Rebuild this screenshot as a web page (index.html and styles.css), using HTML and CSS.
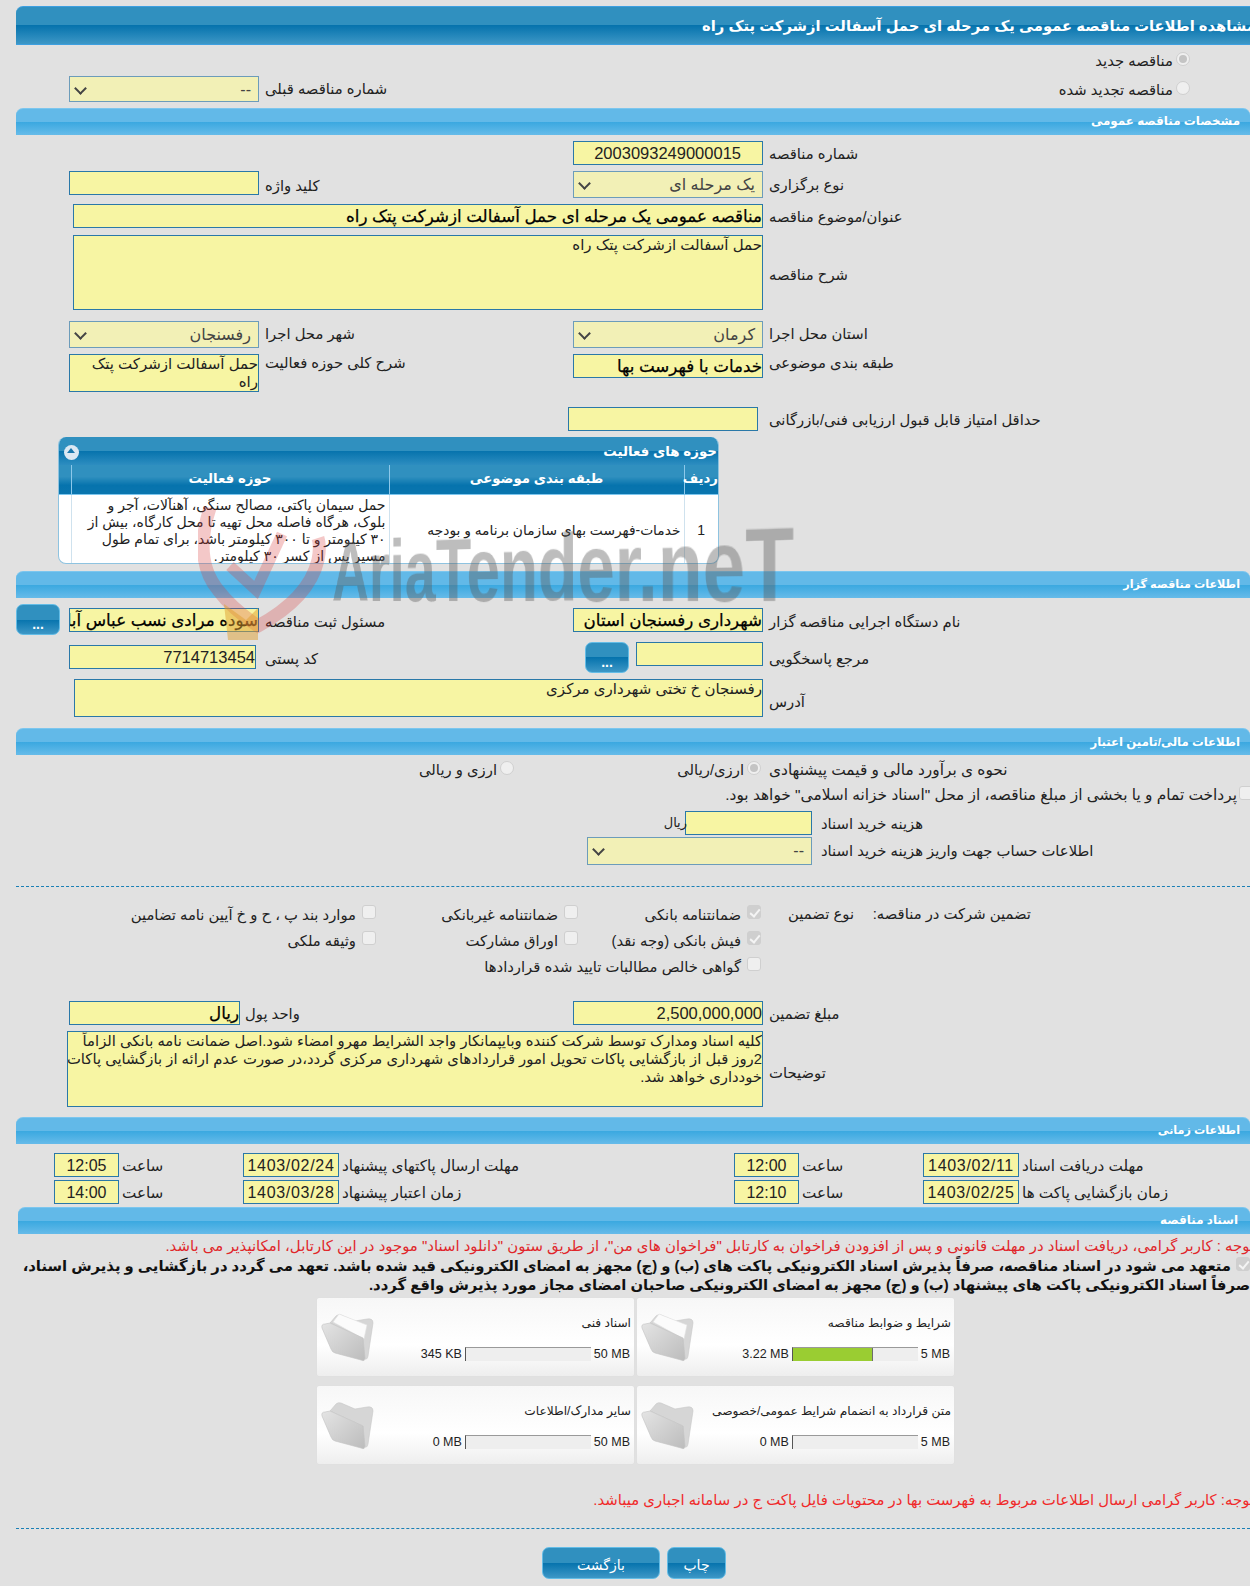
FILE: index.html
```html
<!DOCTYPE html>
<html lang="fa" dir="rtl">
<head>
<meta charset="utf-8">
<title>مشاهده اطلاعات مناقصه</title>
<link rel="stylesheet" href="styles.css">
</head>
<body>
<main class="page">
  <h1 class="title-bar"><span class="title-text">مشاهده اطلاعات مناقصه عمومی یک مرحله ای حمل آسفالت ازشرکت پتک راه</span></h1>

  <div class="row h31">
    <label class="lbl radio-a radio-first"><input type="radio" class="rad on" disabled checked>مناقصه جدید</label>
  </div>
  <div class="row h32">
    <label class="lbl radio-a"><input type="radio" class="rad" disabled>مناقصه تجدید شده</label>
    <span></span>
    <span class="lbl">شماره مناقصه قبلی</span>
    <div class="sel">--</div>
  </div>

  <h2 class="bar">مشخصات مناقصه عمومی</h2>
  <div class="row m6">
    <span class="lbl">شماره مناقصه</span>
    <div class="inp center">2003093249000015</div>
  </div>
  <div class="row m6">
    <span class="lbl pt3">نوع برگزاری</span>
    <div class="sel tall">یک مرحله ای</div>
    <span class="lbl pt4">کلید واژه</span>
    <div class="inp"></div>
  </div>
  <div class="row m6">
    <span class="lbl">عنوان/موضوع مناقصه</span>
    <div class="inp strong w690 span3">مناقصه عمومی یک مرحله ای حمل آسفالت ازشرکت پتک راه</div>
  </div>
  <div class="row m7">
    <span class="lbl lbl-mid">شرح مناقصه</span>
    <div class="inp area h75 w690 span3">حمل آسفالت ازشرکت پتک راه</div>
  </div>
  <div class="row m11">
    <span class="lbl">استان محل اجرا</span>
    <div class="sel tall">کرمان</div>
    <span class="lbl">شهر محل اجرا</span>
    <div class="sel tall">رفسنجان</div>
  </div>
  <div class="row m6">
    <span class="lbl up">طبقه بندی موضوعی</span>
    <div class="inp strong">خدمات با فهرست بها</div>
    <span class="lbl up">شرح کلی حوزه فعالیت</span>
    <div class="inp area h38">حمل آسفالت ازشرکت پتک راه</div>
  </div>
  <div class="row m15">
    <span class="lbl">حداقل امتیاز قابل قبول ارزیابی فنی/بازرگانی</span>
    <div class="inp shift"></div>
  </div>

  <section class="grid-box">
    <div class="grid-title"><span>حوزه های فعالیت</span><i class="collapse"></i></div>
    <table class="grid">
      <thead>
        <tr><th class="c1">ردیف</th><th class="c2">طبقه بندی موضوعی</th><th class="c3">حوزه فعالیت</th><th class="c4"></th></tr>
      </thead>
      <tbody>
        <tr>
          <td class="c1">1</td>
          <td class="c2">خدمات-فهرست بهای سازمان برنامه و بودجه</td>
          <td class="c3">حمل سیمان پاکتی، مصالح سنگی، آهنآلات، آجر و بلوک، هرگاه فاصله محل تهیه تا محل کارگاه، بیش از ۳۰ کیلومتر و تا ۳۰۰ کیلومتر باشد، برای تمام طول مسیر پس از کسر ۳۰ کیلومتر.</td>
          <td class="c4"></td>
        </tr>
      </tbody>
    </table>
  </section>

  <h2 class="bar m7 bar-sm">اطلاعات مناقصه گزار</h2>
  <div class="row m6 wide">
    <span class="lbl pt7">نام دستگاه اجرایی مناقصه گزار</span>
    <div class="inp strong pt4m clip">شهرداری رفسنجان استان</div>
    <span class="lbl pt7">مسئول ثبت مناقصه</span>
    <div class="inp strong pt4m clip">سوده مرادی نسب عباس آباد</div>
    <button class="btn dots" type="button">...</button>
  </div>
  <div class="row m7">
    <span class="lbl pt6">مرجع پاسخگویی</span>
    <div class="pair">
      <div class="inp short"></div>
      <button class="btn dots" type="button">...</button>
    </div>
    <span class="lbl pt6">کد پستی</span>
    <div class="inp m3top w187 num">7714713454</div>
  </div>
  <div class="row m6">
    <span class="lbl lbl-addr">آدرس</span>
    <div class="inp area h38 w689 span3">رفسنجان خ تختی شهرداری مرکزی</div>
  </div>

  <h2 class="bar m11 bar-md">اطلاعات مالی/تامین اعتبار</h2>
  <div class="row h27">
    <span class="lbl pt4 big">نحوه ی برآورد مالی و قیمت پیشنهادی</span>
    <label class="lbl pt4 opt"><input type="radio" class="rad on" disabled checked>ارزی/ریالی</label>
    <label class="lbl pt4 opt opt-b"><input type="radio" class="rad" disabled>ارزی و ریالی</label>
  </div>
  <label class="lbl full-check big"><input type="checkbox" class="chk" disabled>پرداخت تمام و یا بخشی از مبلغ مناقصه، از محل "اسناد خزانه اسلامی" خواهد بود.</label>
  <div class="cost-row m3">
    <span class="lbl">هزینه خرید اسناد</span>
    <div class="inp w127"></div>
    <span class="unit">ریال</span>
  </div>
  <div class="cost-row m2">
    <span class="lbl pt3">اطلاعات حساب جهت واریز هزینه خرید اسناد</span>
    <div class="sel acct">--</div>
  </div>
  <hr class="dash m21">

  <div class="guarantee">
    <span class="g-title">تضمین شرکت در مناقصه:</span>
    <span class="g-type">نوع تضمین</span>
    <label class="g-item"><input type="checkbox" class="chk on" disabled checked>ضمانتنامه بانکی</label>
    <label class="g-item"><input type="checkbox" class="chk" disabled>ضمانتنامه غیربانکی</label>
    <label class="g-item"><input type="checkbox" class="chk" disabled>موارد بند پ ، ح و خ آیین نامه تضامین</label>
    <label class="g-item g-c3"><input type="checkbox" class="chk on" disabled checked>فیش بانکی (وجه نقد)</label>
    <label class="g-item"><input type="checkbox" class="chk" disabled>اوراق مشارکت</label>
    <label class="g-item"><input type="checkbox" class="chk" disabled>وثیقه ملکی</label>
    <label class="g-item g-c3 g-span"><input type="checkbox" class="chk" disabled>گواهی خالص مطالبات تایید شده قراردادها</label>
  </div>

  <div class="row m25">
    <span class="lbl">مبلغ تضمین</span>
    <div class="inp num">2,500,000,000</div>
    <span class="lbl lbl-unit">واحد پول</span>
    <div class="inp strong w171">ریال</div>
  </div>
  <div class="row m6">
    <span class="lbl lbl-desc">توضیحات</span>
    <div class="inp area desc h76 w696 span3">کلیه اسناد ومدارک توسط شرکت کننده وبایپمانکار واجد الشرایط مهرو امضاء شود.اصل ضمانت نامه بانکی  الزاماً<br>2روز قبل از بازگشایی پاکات تحویل امور قراردادهای شهرداری مرکزی گردد،در صورت عدم ارائه از بازگشایی پاکات<br>خودداری خواهد شد.</div>
  </div>

  <h2 class="bar m10 bar-sm">اطلاعات زمانی</h2>
  <div class="dates">
    <span class="d-lbl">مهلت دریافت اسناد</span><div class="inp d-val date">1403/02/11</div>
    <span class="d-lbl">ساعت</span><div class="inp d-val">12:00</div>
    <span class="d-lbl">مهلت ارسال پاکتهای پیشنهاد</span><div class="inp d-val date">1403/02/24</div>
    <span class="d-lbl">ساعت</span><div class="inp d-val">12:05</div>
    <span class="d-lbl">زمان بازگشایی پاکت ها</span><div class="inp d-val date">1403/02/25</div>
    <span class="d-lbl">ساعت</span><div class="inp d-val">12:10</div>
    <span class="d-lbl">زمان اعتبار پیشنهاد</span><div class="inp d-val date">1403/03/28</div>
    <span class="d-lbl">ساعت</span><div class="inp d-val">14:00</div>
  </div>

  <h2 class="bar m3 bar-docs">اسناد مناقصه</h2>
  <p class="red-note first">توجه : کاربر گرامی، دریافت اسناد در مهلت قانونی و پس از افزودن فراخوان به کارتابل "فراخوان های من"، از طریق ستون "دانلود اسناد" موجود در این کارتابل، امکانپذیر می باشد.</p>
  <p class="pledge"><input type="checkbox" class="chk on" disabled checked>متعهد می شود در اسناد مناقصه، صرفاً پذیرش اسناد الکترونیکی پاکت های (ب) و (ج) مجهز به امضای الکترونیکی قید شده باشد. تعهد می گردد در بازگشایی و پذیرش اسناد،<br>صرفاً اسناد الکترونیکی پاکت های پیشنهاد (ب) و (ج) مجهز به امضای الکترونیکی صاحبان امضای مجاز مورد پذیرش واقع گردد.</p>

  <div class="cards">
    <article class="card">
      <svg class="folder" viewBox="0 0 70 70"><use href="#folder-open"/></svg>
      <h3>شرایط و ضوابط مناقصه</h3>
      <div class="meter"><span>5 MB</span><div class="track"><div class="fill" style="width:64%"></div></div><span>3.22 MB</span></div>
    </article>
    <article class="card">
      <svg class="folder" viewBox="0 0 70 70"><use href="#folder-open"/></svg>
      <h3>اسناد فنی</h3>
      <div class="meter"><span>50 MB</span><div class="track"></div><span>345 KB</span></div>
    </article>
    <article class="card">
      <svg class="folder" viewBox="0 0 70 70"><use href="#folder-empty"/></svg>
      <h3>متن قرارداد به انضمام شرایط عمومی/خصوصی</h3>
      <div class="meter"><span>5 MB</span><div class="track"></div><span>0 MB</span></div>
    </article>
    <article class="card">
      <svg class="folder" viewBox="0 0 70 70"><use href="#folder-empty"/></svg>
      <h3>سایر مدارک/اطلاعات</h3>
      <div class="meter"><span>50 MB</span><div class="track"></div><span>0 MB</span></div>
    </article>
  </div>

  <p class="red-note last">توجه: کاربر گرامی ارسال اطلاعات مربوط به فهرست بها در محتویات فایل پاکت ج در سامانه اجباری میباشد.</p>
  <hr class="dash m19">
  <div class="actions">
    <button class="btn print" type="button">چاپ</button>
    <button class="btn back" type="button">بازگشت</button>
  </div>
</main>

<svg class="defs" width="0" height="0" aria-hidden="true">
  <defs>
    <linearGradient id="fg" x1="0" y1="0" x2="1" y2="1"><stop offset="0" stop-color="#e4e4e4"/><stop offset="1" stop-color="#bcbcbc"/></linearGradient>
    <symbol id="folder-empty" viewBox="0 0 70 70">
      <path d="M13 25 L19 18 Q21 16 24 17 L38 23 L50 21 Q56 20 56 25 L51 58 Q50 63 47 60 L46 40 Z" fill="#d6d6d6" stroke="#c8c8c8" stroke-width=".6"/>
      <path d="M5 30 Q4 26 8 26 L13 25 L46 40 L48 60 Q48 64 44 62 L18 55 Q15 54 14 51 Z" fill="url(#fg)" stroke="#c2c2c2" stroke-width=".6"/>
    </symbol>
    <symbol id="folder-open" viewBox="0 0 70 70">
      <path d="M13 25 L19 18 Q21 16 24 17 L38 23 L50 21 Q56 20 56 25 L51 58 Q50 63 47 60 L46 40 Z" fill="#d6d6d6" stroke="#c8c8c8" stroke-width=".6"/>
      <path d="M16 24 L22 16 L50 27 L47 41 Z" fill="#fbfbfb" stroke="#e0e0e0" stroke-width=".6"/>
      <path d="M5 30 Q4 26 8 26 L13 25 L46 40 L48 60 Q48 64 44 62 L18 55 Q15 54 14 51 Z" fill="url(#fg)" stroke="#c2c2c2" stroke-width=".6"/>
    </symbol>
  </defs>
</svg>

<div class="watermark" aria-hidden="true">
  <svg class="wm-logo" viewBox="0 0 130 150">
    <path d="M12 10 C2 40 2 70 20 92 C32 108 48 120 60 128 C82 116 112 96 120 62 C122 52 122 46 120 40" fill="none" stroke="#d9383a" stroke-opacity=".28" stroke-width="13"/>
    <path d="M32 68 L58 92 L84 36" fill="none" stroke="#d9383a" stroke-opacity=".28" stroke-width="11"/>
    <path d="M26 106 L48 122 L60 110 L60 142 L30 142 Z" fill="#e0a030" fill-opacity=".5"/>
  </svg>
  <span class="wm-text">AriaTender.neT</span>
</div>
</body>
</html>
```

FILE: styles.css
```css
* { box-sizing: border-box; }
html, body { margin: 0; padding: 0; }
body {
  background: #e1e1e1;
  width: 1250px;
  height: 1586px;
  overflow: hidden;
  position: relative;
  font: 14.8px/18px "Liberation Sans", "DejaVu Sans", sans-serif;
  color: #222;
}
.page { width: 1234px; margin: 6px 0 0 16px; }

.title-bar {
  margin: 0; height: 39px; border-radius: 7px 0 0 0;
  background: linear-gradient(#3090bf 0 50%, #0673ad 50%, #3d97c6 100%);
  border-top: 1px solid #3d9fe0; border-bottom: 1px solid #3d9fe0;
  color: #fff; font-size: 14.75px; font-weight: bold; line-height: 38px;
  white-space: nowrap; overflow: hidden;
}
.title-text { margin-right: -6px; display: inline-block; }

.bar {
  margin: 0; height: 27px; border-radius: 7px 7px 0 0;
  background: linear-gradient(#62b9e8 0 50%, #3aa8e0 50%, #66bbe9 100%);
  border-top: 1px solid #7cc6ee;
  color: #fff; font-size: 11.9px; font-weight: bold; line-height: 25px;
  padding-right: 10px;
}
.bar-sm { font-size: 11.2px; }
.bar-md { font-size: 11.7px; }
.bar-docs { margin-left: 2px; padding-right: 12px; }

.row {
  display: grid;
  grid-template-columns: 487px 190px 314px 190px 53px;
  align-items: start;
  width: 1234px;
}
.h31 { height: 31px; }
.h32 { height: 32px; }
.h27 { height: 27px; }
.m2 { margin-top: 2px; }
.m3 { margin-top: 3px; }
.m6 { margin-top: 6px; }
.m7 { margin-top: 7px; }
.m10 { margin-top: 10px; }
.m11 { margin-top: 11px; }
.m15 { margin-top: 15px; }
.m19 { margin-top: 19px; }
.m21 { margin-top: 21px; }
.m25 { margin-top: 25px; }

.lbl { text-align: left; padding: 2px 0 0 6px; line-height: 22px; white-space: nowrap; }
.big { font-size: 15.4px; }
.pt3 { padding-top: 3px; }
.pt4 { padding-top: 4px; }
.pt6 { padding-top: 6px; }
.pt7 { padding-top: 7px; }
.up { padding-top: 0; margin-top: -2px; }
.lbl-mid { padding-top: 29px; }
.lbl-addr { padding-top: 12px; }
.lbl-desc { padding-top: 31px; }
.lbl-unit { margin-left: -20px; }
.radio-a { text-align: right; padding: 3px 60px 0 0; display: flex; align-items: center; gap: 3px; line-height: 22px; }
.radio-first { padding-top: 5px; }
.opt { display: flex; align-items: center; gap: 3px; padding-left: 0; padding-right: 2px; }
.opt-b { padding-right: 59px; }

.rad, .chk {
  appearance: none; -webkit-appearance: none; margin: 0; flex: none;
  width: 14px; height: 14px; background: #efefef;
  border: 1px solid #cfcfcf; position: relative; top: -2px;
}
.rad { border-radius: 50%; }
.rad.on::after {
  content: ""; position: absolute; inset: 2px; border-radius: 50%; background: #c4c4c4;
}
.chk { border-radius: 3px; }
.chk.on { background: #cfcfcf; }
.chk.on::after {
  content: ""; position: absolute; left: 4px; top: 1px; width: 4px; height: 8px;
  border: solid #f4f4f4; border-width: 0 2px 2px 0; transform: rotate(40deg);
}

.inp {
  height: 24px; background: #f7f5a3; border: 1px solid #2a78a8;
  font-size: 16.5px; line-height: 23px; padding: 0 3px 0 3px; color: #222;
  white-space: nowrap; overflow: hidden;
  text-align: left; direction: ltr;
}
.inp.center { text-align: right; padding-right: 21px; }
.strong, .area { direction: rtl; text-align: right; padding: 0; }
.strong { font-size: 16.7px; font-weight: normal; color: #000; line-height: 24px; -webkit-text-stroke: .25px #000; }
.area { white-space: normal; font-size: 15px; line-height: 18px; }
.desc { font-size: 14.8px; white-space: nowrap; }
.clip { overflow: hidden; }
.num { text-align: right; padding: 0; }
.span3 { grid-column: span 3; }
.w690 { width: 690px; justify-self: start; }
.w689 { width: 689px; justify-self: start; }
.w696 { width: 696px; justify-self: start; }
.h75 { height: 75px; }
.h38 { height: 38px; }
.h76 { height: 76px; }
.shift { margin-right: 5px; margin-left: -5px; width: 190px; }
.pt4m { margin-top: 4px; }
.m3top { margin-top: 3px; }
.w187 { width: 187px; justify-self: end; }
.w171 { width: 171px; justify-self: end; }
.short { width: 127px; flex: none; }
.pair { display: flex; gap: 7px; }

.sel {
  height: 26px; background: #f2f0b6; border: 1px solid #6c9cba;
  color: #444; font-size: 16px; line-height: 25px; padding-right: 7px; position: relative;
}
.tall { height: 27px; }
.sel::after {
  content: ""; position: absolute; left: 6px; top: 7px; width: 7px; height: 7px;
  border: solid #444; border-width: 0 2px 2px 0; transform: rotate(45deg);
}
.wide .dots { justify-self: end; }

.grid-box {
  margin: 6px 531px 0 0; width: 661px; height: 127px;
  border: 1px solid #8ec3e0; border-top: 0; border-radius: 8px; overflow: hidden;
  background: #fff;
}
.grid-title {
  height: 28px; display: flex; justify-content: space-between; align-items: center;
  background: linear-gradient(#3090bf 0 50%, #0673ad 50%, #2d8dc0 100%);
  color: #fff; font-weight: bold; font-size: 13.4px; padding: 2px 1px 0 5px;
}
.collapse {
  width: 15px; height: 15px; border-radius: 50%; background: #dbe8f3; position: relative;
}
.collapse::after {
  content: ""; position: absolute; left: 3px; top: 3px;
  border: 4.5px solid transparent; border-bottom: 5px solid #1a77ad; border-top: 0;
}
.grid { border-collapse: collapse; width: 660px; table-layout: fixed; }
.grid th {
  height: 29px; padding: 0 0 1px; color: #fff; font-size: 13.3px; font-weight: bold;
  background: linear-gradient(#3090bf 0 40%, #0673ad 70%, #0a75ae 100%);
  border-left: 1px solid #8cc8ea; border-bottom: 1px solid #7cc6ee;
}
.grid td {
  height: 69px; padding: 2px 3px 0; vertical-align: middle; font-size: 14px; line-height: 17px;
  border-left: 1px solid #cfe2ee; color: #222;
}
.c1 { width: 34px; text-align: center; }
.c2 { width: 295px; }
.c3 { width: 318px; }
.c4 { width: 13px; border-left: 0 !important; }
td.c2 { text-align: right; font-size: 13.8px; }
td.c1 { font-family: "Liberation Sans", sans-serif; font-size: 14px; }

.btn {
  border: 1px solid #63bce6; border-radius: 7px; color: #fff; font: 14px "Liberation Sans", "DejaVu Sans", sans-serif;
  background: linear-gradient(#3090bf 0 50%, #0673ad 50%, #3d97c6 100%);
  padding: 0;
}
.dots { width: 44px; height: 31px; padding-top: 9px; font-weight: bold; }
.print { width: 59px; height: 32px; padding-top: 4px; }
.back { width: 118px; height: 32px; padding-top: 4px; }

.full-check {
  display: flex; align-items: center; gap: 2px; height: 26px; padding: 0; margin-right: -3px; text-align: right;
}
.cost-row { display: grid; grid-template-columns: 438px auto 1fr; align-items: start; }
.cost-row .lbl { padding-left: 9px; }
.w127 { width: 127px; }
.unit { line-height: 24px; font-size: 13px; margin-right: -2px; }
.acct { width: 225px; height: 28px; }
.dash { border: 0; border-top: 1px dashed #1a7fb5; margin-bottom: 0; margin-left: 0; margin-right: 0; }

.guarantee {
  display: grid; grid-template-columns: 219px 158px 112px 183px 202px 1fr;
  grid-auto-rows: 26px; padding-top: 15px; height: 89px; white-space: nowrap;
}
.g-title, .g-type, .g-item { line-height: 24px; }
.g-title { grid-column: 2; }
.g-type { grid-column: 3; padding-right: 19px; }
.g-item { display: flex; align-items: center; gap: 6px; }
.g-item .chk { top: -3px; }
.g-c3 { grid-column: 4; }
.g-span { grid-column: 4 / span 3; }

.dates {
  display: grid; grid-template-columns: 231px 96px 124px 65px 395px 96px 124px 65px;
  grid-auto-rows: 24px; row-gap: 3px; margin-top: 9px; white-space: nowrap;
}
.d-lbl { text-align: left; padding-left: 3px; line-height: 25px; font-size: 15.2px; }
.d-val { text-align: center; padding: 0; font-size: 16px; direction: ltr; }
.date { letter-spacing: .7px; }

.red-note { margin: 0; color: #e0262a; font-size: 14.9px; line-height: 18px; white-space: nowrap; }
.first { margin: 3px -4px 0 0; }
.last { margin: 27px -4px 0 0; color: #f02a2a; }
.pledge { margin: 2px 0 0 0; font-size: 14.8px; font-weight: bold; line-height: 18.5px; white-space: nowrap; color: #111; }
.pledge .chk { margin-left: 5px; top: 0; background: #cfcfcf; }

.cards {
  display: grid; grid-template-columns: 317px 317px; grid-auto-rows: 78px; gap: 10px 3px;
  margin: 4px auto 0 301px; width: 637px;
}
.card {
  position: relative; padding: 16px 3px 0; border-radius: 2px;
  background: linear-gradient(#f7f7f7, #ffffff 60%, #eeeeee);
  box-shadow: 0 0 1px #cfcfcf;
}
.card h3 { margin: 0; font-weight: normal; font-size: 12.2px; line-height: 18px; color: #222; }
.folder { position: absolute; left: 0; top: 0; width: 70px; height: 70px; }
.meter {
  display: flex; align-items: center; gap: 3px; margin-top: 14px; font-size: 12.5px; line-height: 16px;
  padding-right: 1px;
}
.meter span { direction: ltr; unicode-bidi: isolate; }
.track {
  width: 126px; height: 14px; background: #eeeeee; direction: ltr; flex: none;
  border-top: 1px solid #9a9a9a; border-left: 1px solid #555;
}
.fill { height: 100%; background: #9acd32; border-right: 1px solid #6d6d6d; }

.actions { display: flex; gap: 7px; margin: 18px 524px 0 0; }

.defs { position: absolute; }
.watermark { position: absolute; left: 0; top: 0; width: 1250px; height: 1586px; pointer-events: none; z-index: 5; }
.wm-logo { position: absolute; left: 198px; top: 498px; width: 130px; height: 150px; }
.wm-text {
  position: absolute; left: 332px; top: 530px; direction: ltr;
  font: bold 84px/84px "Liberation Sans", sans-serif; color: rgba(90,90,90,.4);
  transform-origin: 0 71px; transform: perspective(780px) rotateY(-25deg) scaleX(.66); white-space: nowrap;
}
```
